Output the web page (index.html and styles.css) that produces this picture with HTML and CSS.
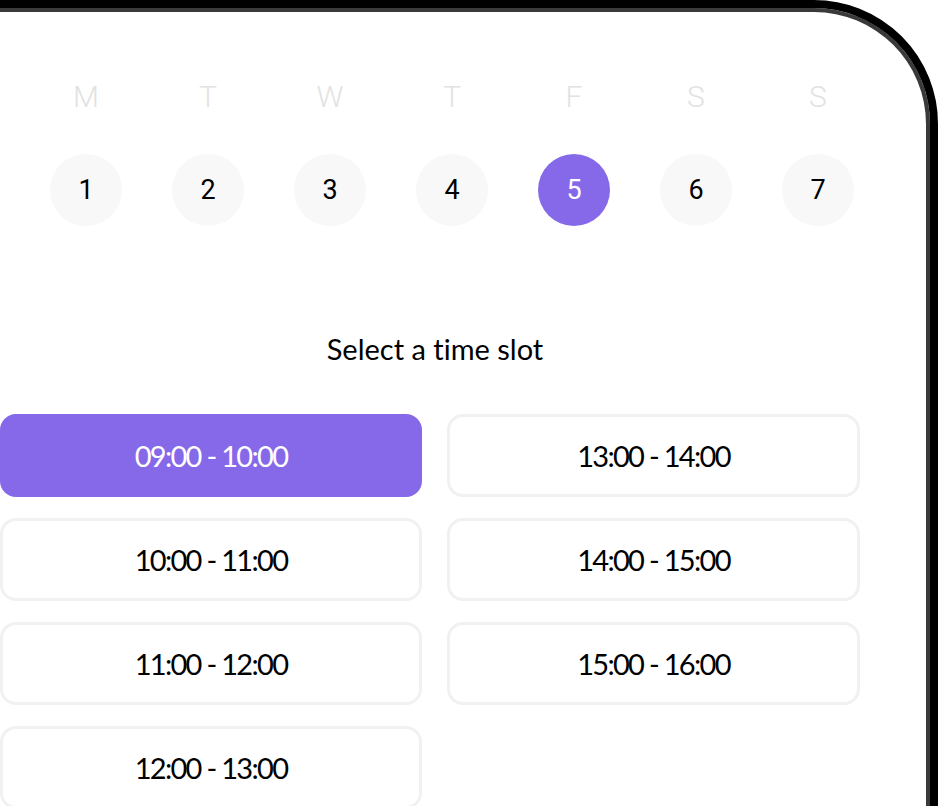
FILE: index.html
```html
<!DOCTYPE html>
<html lang="en">
<head>
<meta charset="utf-8">
<title>Select a time slot</title>
<link rel="stylesheet" href="styles.css">
</head>
<body>
<div class="phone">
  <div class="screen">
    <div class="week">
      <div class="day-name">M</div>
      <div class="day-name">T</div>
      <div class="day-name">W</div>
      <div class="day-name">T</div>
      <div class="day-name">F</div>
      <div class="day-name">S</div>
      <div class="day-name">S</div>
      <div class="day-cell"><span class="day-num">1</span></div>
      <div class="day-cell"><span class="day-num">2</span></div>
      <div class="day-cell"><span class="day-num">3</span></div>
      <div class="day-cell"><span class="day-num">4</span></div>
      <div class="day-cell"><span class="day-num is-selected">5</span></div>
      <div class="day-cell"><span class="day-num">6</span></div>
      <div class="day-cell"><span class="day-num">7</span></div>
    </div>
    <h2 class="title">Select a time slot</h2>
    <div class="slots">
      <div class="slot-col">
        <div class="slot is-selected">09:00 - 10:00</div>
        <div class="slot">10:00 - 11:00</div>
        <div class="slot">11:00 - 12:00</div>
        <div class="slot">12:00 - 13:00</div>
      </div>
      <div class="slot-col slot-col--right">
        <div class="slot">13:00 - 14:00</div>
        <div class="slot">14:00 - 15:00</div>
        <div class="slot">15:00 - 16:00</div>
      </div>
    </div>
  </div>
</div>
</body>
</html>
```
FILE: styles.css
```css
html, body {
  margin: 0;
  padding: 0;
  background: #ffffff;
  overflow: hidden;
}

body {
  width: 938px;
  height: 806px;
}

.phone {
  box-sizing: border-box;
  width: 998px;
  height: 980px;
  margin-left: -60px;
  border: 8px solid #000000;
  border-top-right-radius: 124px;
  box-shadow: inset 0 0 0 4px #3a3a3a;
  background: #ffffff;
}

.screen {
  padding-left: 52px;
  padding-top: 0;
  font-family: "Roboto", "Liberation Sans", sans-serif;
  color: #000000;
}

.week {
  margin-left: 25px;
  display: grid;
  grid-template-columns: repeat(7, 122px);
  grid-template-rows: 77px 72px;
  row-gap: 0;
  padding-top: 69px;
}

.day-name {
  text-align: center;
  font-size: 30px;
  font-weight: 300;
  color: #e2e2e2;
  line-height: 40px;
  align-self: start;
}

.day-cell {
  display: flex;
  justify-content: center;
}

.day-num {
  width: 72px;
  height: 72px;
  border-radius: 50%;
  background: #f8f8f8;
  display: flex;
  align-items: center;
  justify-content: center;
  font-size: 27px;
  font-weight: 400;
  color: #000000;
}

.day-num.is-selected {
  background: #8569e8;
  color: #ffffff;
}

.title {
  margin: 105px 0 0 0;
  width: 870px;
  text-align: center;
  font-family: "Lato", "Liberation Sans", sans-serif;
  font-size: 29px;
  font-weight: 400;
  letter-spacing: 0px;
  line-height: 36px;
  font-variant-ligatures: none;
}

.slots {
  margin-top: 47px;
  display: grid;
  grid-template-columns: 422px 413px;
  column-gap: 25px;
}

.slot-col {
  display: flex;
  flex-direction: column;
  gap: 21px;
}

.slot {
  box-sizing: border-box;
  height: 83px;
  border: 3px solid #f1f1f1;
  border-radius: 16px;
  display: flex;
  align-items: center;
  justify-content: center;
  font-family: "Lato", "Liberation Sans", sans-serif;
  font-size: 29px;
  font-weight: 400;
  letter-spacing: -1.7px;
  color: #000000;
}

.slot.is-selected {
  background: #8569e8;
  border-color: #8569e8;
  color: #ffffff;
}
```
